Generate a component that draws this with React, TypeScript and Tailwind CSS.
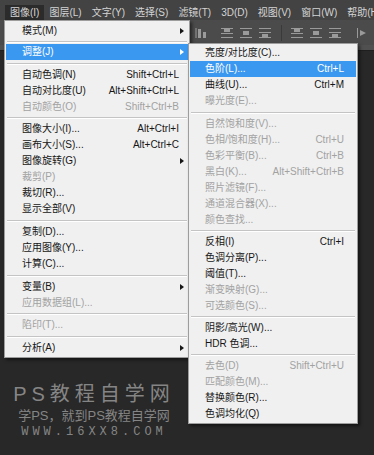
import React from "react";

type Row =
  | { sep: string }
  | { t: string; k?: string; off?: boolean; on?: boolean; arrow?: boolean };

const mainRows: Row[] = [
  { t: "模式(M)", arrow: true },
  { sep: "h-[5px]" },
  { t: "调整(J)", arrow: true, on: true },
  { sep: "h-[7px]" },
  { t: "自动色调(N)", k: "Shift+Ctrl+L" },
  { t: "自动对比度(U)", k: "Alt+Shift+Ctrl+L" },
  { t: "自动颜色(O)", k: "Shift+Ctrl+B", off: true },
  { sep: "h-[6px]" },
  { t: "图像大小(I)...", k: "Alt+Ctrl+I" },
  { t: "画布大小(S)...", k: "Alt+Ctrl+C" },
  { t: "图像旋转(G)", arrow: true },
  { t: "裁剪(P)", off: true },
  { t: "裁切(R)..." },
  { t: "显示全部(V)" },
  { sep: "h-[7px]" },
  { t: "复制(D)..." },
  { t: "应用图像(Y)..." },
  { t: "计算(C)..." },
  { sep: "h-[7px]" },
  { t: "变量(B)", arrow: true },
  { t: "应用数据组(L)...", off: true },
  { sep: "h-[6px]" },
  { t: "陷印(T)...", off: true },
  { sep: "h-[7px]" },
  { t: "分析(A)", arrow: true },
];

const subRows: Row[] = [
  { t: "亮度/对比度(C)..." },
  { t: "色阶(L)...", k: "Ctrl+L", on: true },
  { t: "曲线(U)...", k: "Ctrl+M" },
  { t: "曝光度(E)...", off: true },
  { sep: "h-[7px]" },
  { t: "自然饱和度(V)...", off: true },
  { t: "色相/饱和度(H)...", k: "Ctrl+U", off: true },
  { t: "色彩平衡(B)...", k: "Ctrl+B", off: true },
  { t: "黑白(K)...", k: "Alt+Shift+Ctrl+B", off: true },
  { t: "照片滤镜(F)...", off: true },
  { t: "通道混合器(X)...", off: true },
  { t: "颜色查找...", off: true },
  { sep: "h-[6px]" },
  { t: "反相(I)", k: "Ctrl+I" },
  { t: "色调分离(P)..." },
  { t: "阈值(T)..." },
  { t: "渐变映射(G)...", off: true },
  { t: "可选颜色(S)...", off: true },
  { sep: "h-[6px]" },
  { t: "阴影/高光(W)..." },
  { t: "HDR 色调..." },
  { sep: "h-[6px]" },
  { t: "去色(D)", k: "Shift+Ctrl+U", off: true },
  { t: "匹配颜色(M)...", off: true },
  { t: "替换颜色(R)..." },
  { t: "色调均化(Q)" },
];

const menubar = [
  { t: "图像(I)", on: true },
  { t: "图层(L)" },
  { t: "文字(Y)" },
  { t: "选择(S)" },
  { t: "滤镜(T)" },
  { t: "3D(D)" },
  { t: "视图(V)" },
  { t: "窗口(W)" },
  { t: "帮助(H)" },
];

function Menu({ rows, pad }: { rows: Row[]; pad: string }) {
  return (
    <div className="flex flex-col">
      {rows.map((r, i) =>
        "sep" in r ? (
          <div key={i} className={`${r.sep} flex items-center px-[2px]`}>
            <div className="h-[2px] w-full border-t border-[#c4c4c4] border-b-white border-b" />
          </div>
        ) : (
          <div
            key={i}
            className={`mx-[1px] flex h-4 items-center whitespace-nowrap ${pad} ${
              r.on ? "bg-[#3b98f0] text-white" : r.off ? "text-[#a2a2a2]" : "text-[#161616]"
            }`}
          >
            <span>{r.t}</span>
            {r.k && <span className="ml-auto">{r.k}</span>}
            {r.arrow && (
              <span className="ml-auto -mr-[5px] h-0 w-0 border-y-[3.5px] border-l-[4px] border-y-transparent border-l-current" />
            )}
          </div>
        )
      )}
    </div>
  );
}

function Icon({ kind }: { kind: string }) {
  const c = "#9a9a9a";
  if (kind === "bars")
    return (
      <svg width="12" height="12" viewBox="0 0 12 12">
        <path d="M1 1v10" stroke={c} />
        <rect x="3" y="2" width="3" height="9" fill={c} />
        <rect x="8" y="5" width="3" height="6" fill={c} />
      </svg>
    );
  if (kind === "top")
    return (
      <svg width="12" height="12" viewBox="0 0 12 12">
        <path d="M0 1.5h12M0 6.5h12M0 10.5h12" stroke={c} />
        <rect x="3" y="2" width="6" height="3" fill={c} />
      </svg>
    );
  if (kind === "mid")
    return (
      <svg width="12" height="12" viewBox="0 0 12 12">
        <path d="M0 1.5h12M0 10.5h12" stroke={c} />
        <rect x="3" y="4" width="6" height="4" fill={c} />
      </svg>
    );
  if (kind === "bot")
    return (
      <svg width="12" height="12" viewBox="0 0 12 12">
        <path d="M0 1.5h12M0 5.5h12M0 10.5h12" stroke={c} />
        <rect x="3" y="7" width="6" height="3" fill={c} />
      </svg>
    );
  return (
    <svg width="12" height="12" viewBox="0 0 12 12">
      <path d="M1.5 1v10" stroke={c} />
      <path d="M4 3l6 3-6 3z" fill={c} />
    </svg>
  );
}

export default function App() {
  return (
    <div className="relative h-[455px] w-[374px] overflow-hidden bg-[#282828] font-['Liberation_Sans','Noto_Sans_CJK_SC',sans-serif] text-[10px] leading-none">
      {/* menubar */}
      <div className="flex h-[20px] items-end bg-[#434343] pl-[5px]">
        {menubar.map((m) => (
          <div
            key={m.t}
            className={`flex h-[15px] items-center whitespace-nowrap px-[5px] text-[#d4d4d4] ${
              m.on ? "bg-[#2b2b2b]" : ""
            }`}
          >
            {m.t}
          </div>
        ))}
      </div>

      {/* options bar */}
      <div className="flex h-[25px] items-center bg-[#4b4b4b] pl-[195px]">
        <Icon kind="bars" />
        <div className="ml-[14px] flex gap-[7px]">
          <Icon kind="top" />
          <Icon kind="mid" />
          <Icon kind="bot" />
        </div>
        <div className="ml-[10px] h-[16px] w-px bg-[#3a3a3a]" />
        <div className="ml-[9px] flex gap-[7px]">
          <Icon kind="top" />
          <Icon kind="mid" />
          <Icon kind="bot" />
        </div>
        <div className="ml-[15px]">
          <Icon kind="play" />
        </div>
      </div>
      <div className="h-[6px] border-b border-[#1f1f1f] bg-[#505050]" />

      {/* image menu */}
      <div className="absolute left-[4px] top-[20px] w-[186px] border border-[#9d9d9d] bg-[#f0f0f0] pb-[1px] pt-[2px] shadow-[2px_2px_3px_rgba(0,0,0,0.5)]">
        <Menu rows={mainRows} pad="pl-[16px] pr-[9px]" />
      </div>

      {/* adjustments submenu */}
      <div className="absolute left-[188px] top-[43px] w-[170px] border border-[#9d9d9d] bg-[#f0f0f0] pb-[1px] pt-[1px] shadow-[2px_2px_3px_rgba(0,0,0,0.5)]">
        <Menu rows={subRows} pad="pl-[15px] pr-[12px]" />
      </div>

      {/* watermark */}
      <div className="absolute left-[4px] top-[384px] flex w-[180px] flex-col items-center text-[#858585]">
        <div className="text-[20px] tracking-[5px]">PS教程自学网</div>
        <div className="mt-[5px] text-[13px]">学PS，就到PS教程自学网</div>
        <div className="mt-[4px] font-['Liberation_Mono',monospace] text-[12px] tracking-[4px]">WWW.16XX8.COM</div>
      </div>
    </div>
  );
}
